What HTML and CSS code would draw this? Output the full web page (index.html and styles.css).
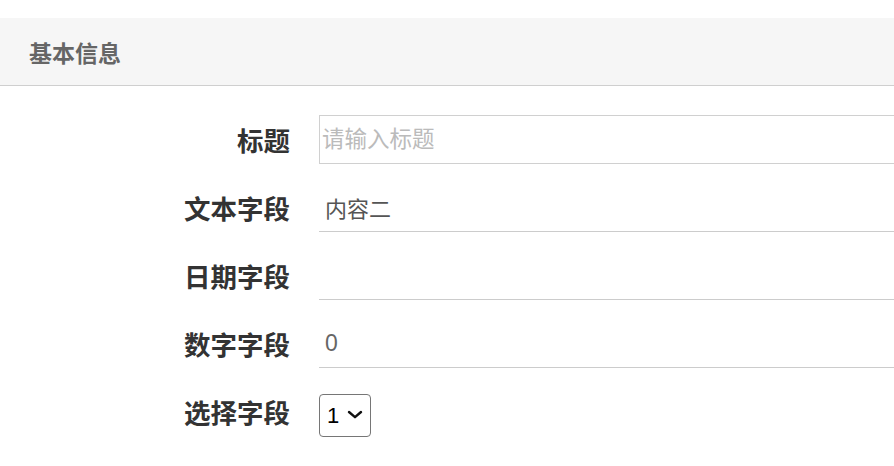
FILE: index.html
```html
<!DOCTYPE html>
<html lang="zh-CN">
<head>
<meta charset="utf-8">
<title>基本信息</title>
<link rel="stylesheet" href="styles.css">
</head>
<body>
<div class="panel">
  <div class="panel-header">基本信息</div>
  <form class="form">
    <div class="row">
      <label class="label" for="f-title">标题</label>
      <input id="f-title" class="input input-boxed" type="text" placeholder="请输入标题">
    </div>
    <div class="row">
      <label class="label" for="f-text">文本字段</label>
      <input id="f-text" class="input input-line" type="text" value="内容二">
    </div>
    <div class="row">
      <label class="label" for="f-date">日期字段</label>
      <input id="f-date" class="input input-line" type="text" value="">
    </div>
    <div class="row">
      <label class="label" for="f-num">数字字段</label>
      <input id="f-num" class="input input-line" type="text" value="0">
    </div>
    <div class="row">
      <label class="label" for="f-sel">选择字段</label>
      <span class="select-wrap">
        <select id="f-sel" class="select">
          <option>1</option>
          <option>2</option>
        </select>
        <svg class="chevron" width="16" height="9" viewBox="0 0 16 9" aria-hidden="true">
          <path d="M2 2 L8 7.2 L14 2" fill="none" stroke="#111" stroke-width="2.4" stroke-linecap="round" stroke-linejoin="round"/>
        </svg>
      </span>
    </div>
  </form>
</div>
</body>
</html>
```

FILE: styles.css
```css
html, body {
  margin: 0;
  padding: 0;
  background: #ffffff;
}
body {
  padding-top: 18px;
  overflow: hidden;
  font-family: "Liberation Sans", "Noto Sans CJK SC", sans-serif;
}
.panel {
  overflow: hidden;
}
.panel-header {
  height: 68px;
  box-sizing: border-box;
  background: #f6f6f6;
  border-bottom: 1px solid #cfcfcf;
  display: flex;
  align-items: center;
  padding-left: 29px;
  font-size: 23px;
  font-weight: bold;
  color: #666666;
}
.form {
  display: grid;
  grid-template-columns: 290px 620px;
  column-gap: 29px;
  row-gap: 19px;
  padding-top: 29px;
  margin: 0;
}
.row {
  display: contents;
}
.label {
  display: flex;
  align-items: center;
  justify-content: flex-end;
  height: 49px;
  font-size: 26.5px;
  font-weight: bold;
  color: #333333;
  font-family: "Noto Sans CJK SC", sans-serif;
}
.input {
  height: 49px;
  box-sizing: border-box;
  margin: 0;
  font-size: 22px;
  font-family: "Liberation Sans", "Noto Sans CJK SC", sans-serif;
  color: #555555;
  outline: none;
  background: #ffffff;
}
.input::placeholder {
  color: #bbbbbb;
}
.input-boxed {
  border: 1px solid #d0d0d0;
  padding: 0 2px;
  font-size: 22.5px;
}
.input-line {
  border: none;
  border-bottom: 1px solid #cccccc;
  padding: 0 6px;
}
#f-num {
  font-size: 23px;
  color: #666666;
}
.select-wrap {
  position: relative;
  justify-self: start;
  align-self: start;
  margin-top: 7px;
  width: 52px;
  height: 43px;
}
.select {
  -webkit-appearance: none;
  appearance: none;
  display: block;
  width: 52px;
  height: 43px;
  box-sizing: border-box;
  margin: 0;
  font-size: 22px;
  font-family: "Liberation Sans", sans-serif;
  color: #000000;
  border: 1px solid #767676;
  border-radius: 4px;
  background: #ffffff;
  padding: 0 0 0 7px;
  outline: none;
}
.chevron {
  position: absolute;
  left: 28px;
  top: 16px;
  pointer-events: none;
}
```
